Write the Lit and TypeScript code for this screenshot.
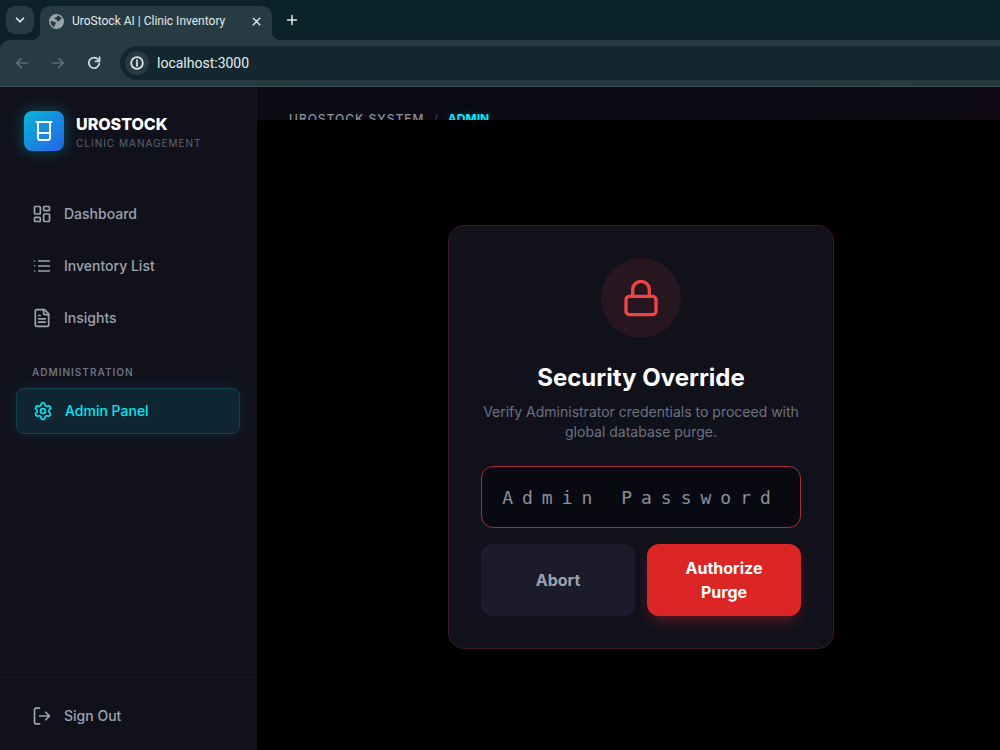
import { LitElement, html, css, svg } from "lit";
import { customElement, property } from "lit/decorators.js";

const icons = {
  dashboard: svg`<rect x="3" y="3" width="7" height="9" rx="1"/><rect x="14" y="3" width="7" height="5" rx="1"/><rect x="14" y="12" width="7" height="9" rx="1"/><rect x="3" y="16" width="7" height="5" rx="1"/>`,
  list: svg`<path d="M8 6h13M8 12h13M8 18h13M3 6h.01M3 12h.01M3 18h.01"/>`,
  file: svg`<path d="M15 2H6a2 2 0 0 0-2 2v16a2 2 0 0 0 2 2h12a2 2 0 0 0 2-2V7Z"/><path d="M14 2v4a2 2 0 0 0 2 2h4M10 9H8M16 13H8M16 17H8"/>`,
  gear: svg`<path d="M9.671 4.136a2.34 2.34 0 0 1 4.659 0 2.34 2.34 0 0 0 3.319 1.915 2.34 2.34 0 0 1 2.33 4.033 2.34 2.34 0 0 0 0 3.831 2.34 2.34 0 0 1-2.33 4.033 2.34 2.34 0 0 0-3.319 1.915 2.34 2.34 0 0 1-4.659 0 2.34 2.34 0 0 0-3.32-1.915 2.34 2.34 0 0 1-2.33-4.033 2.34 2.34 0 0 0 0-3.831A2.34 2.34 0 0 1 6.35 6.051a2.34 2.34 0 0 0 3.319-1.915"/><circle cx="12" cy="12" r="3"/>`,
  logout: svg`<path d="M9 21.500H5a2 2 0 0 1-2-2v-15a2 2 0 0 1 2-2h4M16.500 7.500L21 12l-4.500 4.500M21 12H9"/>`,
  beaker: svg`<path d="M4.5 3h15M6 3v16a2 2 0 0 0 2 2h8a2 2 0 0 0 2-2V3M6 14h12"/>`,
  lock: svg`<rect x="3" y="11" width="18" height="11" rx="2"/><path d="M7 11V7a5 5 0 0 1 10 0v4"/>`,
  chevron: svg`<path d="M6 9l6 6 6-6"/>`,
  close: svg`<path d="M5 5l14 14M19 5L5 19"/>`,
  plus: svg`<path d="M12 3v18M3 12h18"/>`,
  back: svg`<path d="M22 12H3M11 4l-8 8 8 8"/>`,
  forward: svg`<path d="M2 12h19M13 4l8 8-8 8"/>`,
  reload: svg`<path d="M21 13a9 9 0 1 1-2-7l2 2.500M21.500 2v7h-7"/>`,
  info: svg`<circle cx="12" cy="12" r="10"/><path d="M12 11v6M12 7v1"/>`,
};

type IconName = keyof typeof icons;

@customElement("ui-icon")
class UiIcon extends LitElement {
  @property() name: IconName = "list";

  static styles = css`
    :host {
      display: inline-flex;
      flex: none;
      width: 20px;
      height: 20px;
    }
    .glyph {
      width: 100%;
      height: 100%;
      fill: none;
      stroke: currentColor;
      stroke-width: var(--stroke, 2);
      stroke-linecap: round;
      stroke-linejoin: round;
    }
  `;

  render() {
    return html`<svg class="glyph" viewBox="0 0 24 24" aria-hidden="true">${icons[this.name]}</svg>`;
  }
}

@customElement("browser-bar")
class BrowserBar extends LitElement {
  static styles = css`
    :host {
      display: block;
      background: #0b2328;
      font-family: Roboto, sans-serif;
      color: #e3e8ea;
    }
    button {
      display: flex;
      align-items: center;
      justify-content: center;
      padding: 0;
      border: 0;
      background: none;
      color: inherit;
      font: inherit;
    }
    .strip {
      display: flex;
      height: 40px;
    }
    .search {
      width: 28px;
      height: 28px;
      margin: 6px 6px 0;
      border-radius: 9px;
      background: #263c42;
    }
    .search ui-icon {
      width: 14px;
      height: 14px;
      --stroke: 3;
    }
    .tab {
      position: relative;
      display: flex;
      align-items: center;
      gap: 8px;
      width: 232px;
      height: 34px;
      margin-top: 6px;
      padding: 0 10px 4px 9px;
      box-sizing: border-box;
      border-radius: 10px 10px 0 0;
      background: #263c42;
      font-size: 12px;
      line-height: 16px;
    }
    .tab::before,
    .tab::after {
      content: "";
      position: absolute;
      bottom: 0;
      width: 8px;
      height: 8px;
    }
    .tab::before {
      right: 100%;
      background: radial-gradient(circle at 0 0, transparent 8px, #263c42 8px);
    }
    .tab::after {
      left: 100%;
      background: radial-gradient(circle at 100% 0, transparent 8px, #263c42 8px);
    }
    .globe {
      flex: none;
      width: 15px;
      height: 15px;
    }
    .title {
      flex: 1;
      white-space: nowrap;
    }
    .close ui-icon {
      width: 11px;
      height: 11px;
      --stroke: 3;
    }
    .new {
      width: 28px;
      margin-left: 6px;
    }
    .new ui-icon {
      width: 12px;
      height: 12px;
      --stroke: 3;
    }
    .toolbar {
      display: flex;
      align-items: center;
      height: 47px;
      box-sizing: border-box;
      padding-left: 14px;
      border-bottom: 1px solid #3b5056;
      border-radius: 10px 0 0 0;
      background: #263c42;
    }
    .nav {
      width: 16px;
      margin-right: 20px;
      color: #6d7f84;
    }
    .nav ui-icon {
      width: 14px;
      height: 14px;
    }
    .reload {
      width: 16px;
      margin-right: 18px;
      color: #cfd8da;
    }
    .reload ui-icon {
      width: 14px;
      height: 14px;
      --stroke: 3;
    }
    .address {
      flex: 1;
      display: flex;
      align-items: center;
      gap: 8px;
      height: 34px;
      padding-left: 5px;
      border-radius: 17px 0 0 17px;
      background: #12282e;
    }
    .site {
      width: 24px;
      height: 24px;
      border-radius: 50%;
      background: #263c42;
    }
    .site ui-icon {
      width: 14px;
      height: 14px;
      --stroke: 3;
    }
    .url {
      flex: 1;
      min-width: 0;
      padding: 0;
      border: 0;
      background: none;
      color: #e8edee;
      font: 14px/20px Roboto, sans-serif;
      outline: none;
    }
  `;

  render() {
    return html`
      <div class="strip">
        <button class="search" aria-label="Search tabs"><ui-icon name="chevron"></ui-icon></button>
        <div class="tab">
          <svg class="globe" viewBox="0 0 15 15" aria-hidden="true">
            <circle cx="7.500" cy="7.500" r="7.500" fill="#9aa5a9" />
            <path d="M8 1.500c2 .2 4 1.500 5 3.500l-2 .5-1 2-2-.5-.5-1.500-2-.5 .5-1.500 2-.5zM1.500 7l3.500 .5 2 1.500-.5 1.500-1 .5v2.500c-2.500-1-4-3.500-4-6.500z" fill="#263c42" />
          </svg>
          <span class="title">UroStock AI | Clinic Inventory</span>
          <button class="close" aria-label="Close tab"><ui-icon name="close"></ui-icon></button>
        </div>
        <button class="new" aria-label="New tab"><ui-icon name="plus"></ui-icon></button>
      </div>
      <div class="toolbar">
        <button class="nav" aria-label="Back"><ui-icon name="back"></ui-icon></button>
        <button class="nav" aria-label="Forward"><ui-icon name="forward"></ui-icon></button>
        <button class="reload" aria-label="Reload"><ui-icon name="reload"></ui-icon></button>
        <div class="address">
          <button class="site" aria-label="Site information"><ui-icon name="info"></ui-icon></button>
          <input class="url" type="text" aria-label="Address" value="localhost:3000" />
        </div>
      </div>
    `;
  }
}

@customElement("side-bar")
class SideBar extends LitElement {
  static styles = css`
    :host {
      display: flex;
      flex-direction: column;
      flex: none;
      width: 257px;
      box-sizing: border-box;
      border-right: 1px solid #141420;
      background: #11111c;
      color: #9ca3af;
    }
    .brand {
      display: flex;
      align-items: center;
      gap: 12px;
      padding: 24px;
      border-bottom: 1px solid #13131f;
    }
    .logo {
      display: flex;
      align-items: center;
      justify-content: center;
      width: 40px;
      height: 40px;
      border-radius: 8px;
      background: linear-gradient(135deg, #06b6d4, #2563eb);
      box-shadow: 0 0 15px rgba(0, 240, 255, 0.3);
      color: #fff;
    }
    .logo ui-icon {
      width: 24px;
      height: 24px;
    }
    .name {
      margin: 0;
      color: #fff;
      font-size: 16px;
      font-weight: 800;
      line-height: 24px;
    }
    .tagline {
      margin: 0;
      color: #5d636f;
      font-size: 10px;
      line-height: 15px;
      letter-spacing: 1px;
    }
    .menu {
      display: flex;
      flex-direction: column;
      gap: 8px;
      flex: 1;
      padding: 16px;
    }
    .item {
      display: flex;
      align-items: center;
      gap: 12px;
      padding: 12px 16px;
      border-radius: 8px;
      color: inherit;
      font-size: 14px;
      font-weight: 500;
      line-height: 20px;
      text-decoration: none;
    }
    .active {
      border: 1px solid #0c4651;
      background: #0f2632;
      box-shadow: 0 0 15px rgba(0, 240, 255, 0.1);
      color: #00e8f5;
    }
    .heading {
      margin: 0;
      padding: 16px 16px 0;
      border-top: 1px solid #151521;
      color: #6b7280;
      font-size: 10px;
      font-weight: 600;
      line-height: 15px;
      letter-spacing: 1px;
    }
    .foot {
      padding: 16px 16px 12px;
      border-top: 1px solid #181824;
    }
  `;

  render() {
    return html`
      <div class="brand">
        <div class="logo"><ui-icon name="beaker"></ui-icon></div>
        <div>
          <h1 class="name">UROSTOCK</h1>
          <p class="tagline">CLINIC MANAGEMENT</p>
        </div>
      </div>
      <nav class="menu">
        <a class="item" href="#dashboard"><ui-icon name="dashboard"></ui-icon>Dashboard</a>
        <a class="item" href="#inventory"><ui-icon name="list"></ui-icon>Inventory List</a>
        <a class="item" href="#insights"><ui-icon name="file"></ui-icon>Insights</a>
        <h2 class="heading">ADMINISTRATION</h2>
        <a class="item active" href="#admin" aria-current="page"><ui-icon name="gear"></ui-icon>Admin Panel</a>
      </nav>
      <div class="foot">
        <a class="item" href="#signout"><ui-icon name="logout"></ui-icon>Sign Out</a>
      </div>
    `;
  }
}

@customElement("purge-dialog")
class PurgeDialog extends LitElement {
  static styles = css`
    :host {
      display: block;
      width: 100%;
      max-width: 386px;
    }
    .card {
      display: flex;
      flex-direction: column;
      align-items: center;
      padding: 32px;
      border: 1px solid #3d1723;
      border-radius: 16px;
      background: #11111c;
      text-align: center;
    }
    .badge {
      display: flex;
      align-items: center;
      justify-content: center;
      width: 80px;
      height: 80px;
      border-radius: 50%;
      background: #271620;
      color: #ef4444;
    }
    .badge ui-icon {
      width: 40px;
      height: 40px;
    }
    .title {
      margin: 24px 0 8px;
      color: #fff;
      font-size: 24px;
      font-weight: 700;
      line-height: 32px;
    }
    .text {
      margin: 0 0 24px;
      color: #6b7280;
      font-size: 14px;
      line-height: 20px;
    }
    .password {
      width: 100%;
      height: 62px;
      box-sizing: border-box;
      margin-bottom: 16px;
      padding: 16px;
      border: 1px solid #a72d33;
      border-radius: 12px;
      background: #090a11;
      color: #fff;
      font-family: "DejaVu Sans Mono", monospace;
      font-size: 18px;
      line-height: 28px;
      letter-spacing: 9px;
      text-align: center;
      outline: none;
    }
    .password::placeholder {
      color: #8b8f9c;
      opacity: 1;
    }
    .actions {
      display: grid;
      grid-template-columns: 1fr 1fr;
      gap: 12px;
      width: 100%;
    }
    .button {
      padding: 12px 24px;
      border: 0;
      border-radius: 12px;
      font-family: inherit;
      font-size: 16px;
      font-weight: 700;
      line-height: 24px;
    }
    .abort {
      background: #1c1b2c;
      color: #9ca3af;
    }
    .purge {
      background: #dc2626;
      box-shadow: 0 8px 16px -4px rgba(220, 38, 38, 0.4);
      color: #fff;
    }
  `;

  render() {
    return html`
      <form class="card" role="dialog" aria-labelledby="title">
        <div class="badge"><ui-icon name="lock"></ui-icon></div>
        <h2 class="title" id="title">Security Override</h2>
        <p class="text">Verify Administrator credentials to proceed with global database purge.</p>
        <input class="password" type="password" placeholder="Admin Password" aria-label="Admin Password" />
        <div class="actions">
          <button class="button abort" type="button">Abort</button>
          <button class="button purge" type="button">Authorize Purge</button>
        </div>
      </form>
    `;
  }
}

@customElement("app-root")
class AppRoot extends LitElement {
  static styles = css`
    :host {
      display: flex;
      flex-direction: column;
      min-height: 100vh;
      background: #000;
      font-family: Inter, sans-serif;
    }
    .body {
      display: flex;
      flex: 1;
    }
    .main {
      display: flex;
      flex-direction: column;
      flex: 1;
      min-width: 0;
    }
    .crumbs {
      display: flex;
      gap: 9px;
      height: 33px;
      box-sizing: border-box;
      padding: 22px 32px 0;
      overflow: hidden;
      background: linear-gradient(90deg, #0b0b14, #0c0a15 60%, #0e0912);
      color: #8c919d;
      font-size: 12px;
      font-weight: 500;
      line-height: 20px;
      letter-spacing: 1px;
    }
    .slash {
      color: #333744;
    }
    .current {
      color: #00f0ff;
      font-weight: 700;
      letter-spacing: 0;
      text-shadow: 0 0 10px rgba(0, 240, 255, 0.2);
    }
    .stage {
      display: flex;
      align-items: center;
      justify-content: center;
      flex: 1;
      padding: 4px 0 0 25px;
    }
  `;

  render() {
    return html`
      <browser-bar></browser-bar>
      <div class="body">
        <side-bar></side-bar>
        <main class="main">
          <div class="crumbs">
            <span>UROSTOCK SYSTEM</span>
            <span class="slash">/</span>
            <span class="current">ADMIN</span>
          </div>
          <div class="stage"><purge-dialog></purge-dialog></div>
        </main>
      </div>
    `;
  }
}
